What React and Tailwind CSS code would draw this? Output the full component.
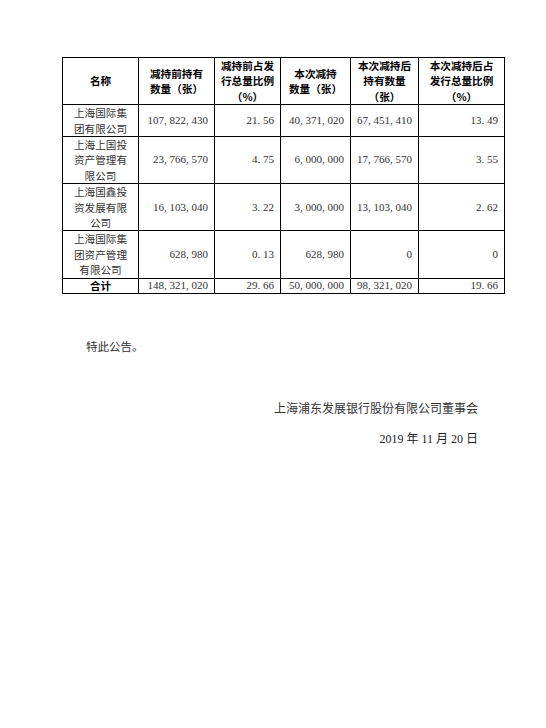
const cjk = { fontFamily: '"Noto Sans CJK SC", "Noto Sans", sans-serif' };
const num = { fontFamily: '"Liberation Serif", "Noto Sans CJK SC", serif' };

const headers = [
  ["名称"],
  ["减持前持有", "数量（张）"],
  ["减持前占发", "行总量比例", "（%）"],
  ["本次减持", "数量（张）"],
  ["本次减持后", "持有数量", "（张）"],
  ["本次减持后占", "发行总量比例", "（%）"],
];

const rows = [
  {
    name: ["上海国际集", "团有限公司"],
    vals: ["107, 822, 430", "21. 56", "40, 371, 020", "67, 451, 410", "13. 49"],
  },
  {
    name: ["上海上国投", "资产管理有", "限公司"],
    vals: ["23, 766, 570", "4. 75", "6, 000, 000", "17, 766, 570", "3. 55"],
  },
  {
    name: ["上海国鑫投", "资发展有限", "公司"],
    vals: ["16, 103, 040", "3. 22", "3, 000, 000", "13, 103, 040", "2. 62"],
  },
  {
    name: ["上海国际集", "团资产管理", "有限公司"],
    vals: ["628, 980", "0. 13", "628, 980", "0", "0"],
  },
];

const widths = ["w-[76px]", "w-[76px]", "w-[66px]", "w-[70px]", "w-[68px]", "w-[86px]"];

function Lines({ lines }) {
  return lines.map((l, i) => (
    <span key={i} className="block">
      {l}
    </span>
  ));
}

export default function App() {
  return (
    <div className="min-h-[728px] w-[546px] bg-white text-[#1a1a1a]">
      <div className="pl-[62px] pt-[57px]">
        <table className="w-[442px] table-fixed border-collapse border border-black text-[10.6px] leading-[15.4px]">
          <colgroup>
            {widths.map((w, i) => (
              <col key={i} className={w} />
            ))}
          </colgroup>
          <thead>
            <tr className="h-[46px]">
              {headers.map((h, i) => (
                <th
                  key={i}
                  style={cjk}
                  className="border border-black p-0 text-center align-middle font-bold text-black"
                >
                  <Lines lines={h} />
                </th>
              ))}
            </tr>
          </thead>
          <tbody>
            {rows.map((r, i) => (
              <tr key={i}>
                <td style={cjk} className="border border-black p-0 text-center align-middle text-[#333]">
                  <Lines lines={r.name} />
                </td>
                {r.vals.map((v, j) => (
                  <td
                    key={j}
                    style={num}
                    className="border border-black py-0 pl-1 pr-[6px] text-right align-middle text-[11px] text-[#333]"
                  >
                    {v}
                  </td>
                ))}
              </tr>
            ))}
            <tr className="h-[15px] leading-[13px]">
              <td style={cjk} className="border border-black p-0 text-center align-middle font-bold text-black">
                合计
              </td>
              {["148, 321, 020", "29. 66", "50, 000, 000", "98, 321, 020", "19. 66"].map((v, j) => (
                <td
                  key={j}
                  style={num}
                  className="border border-black py-0 pl-1 pr-[6px] text-right align-middle text-[11px] text-[#333]"
                >
                  {v}
                </td>
              ))}
            </tr>
          </tbody>
        </table>
      </div>

      <div className="mt-[44px] pl-[86px] text-[11.5px] leading-[16px] text-[#333]" style={cjk}>
        特此公告。
      </div>

      <div className="flex w-[478px] flex-col items-end">
        <div className="mt-[46px] text-[12px] leading-[16px] text-[#333]" style={cjk}>
          上海浦东发展银行股份有限公司董事会
        </div>
        <div className="mt-[15px] text-[12px] leading-[16px] text-[#222]" style={num}>
          2019 年 11 月 20 日
        </div>
      </div>
    </div>
  );
}
